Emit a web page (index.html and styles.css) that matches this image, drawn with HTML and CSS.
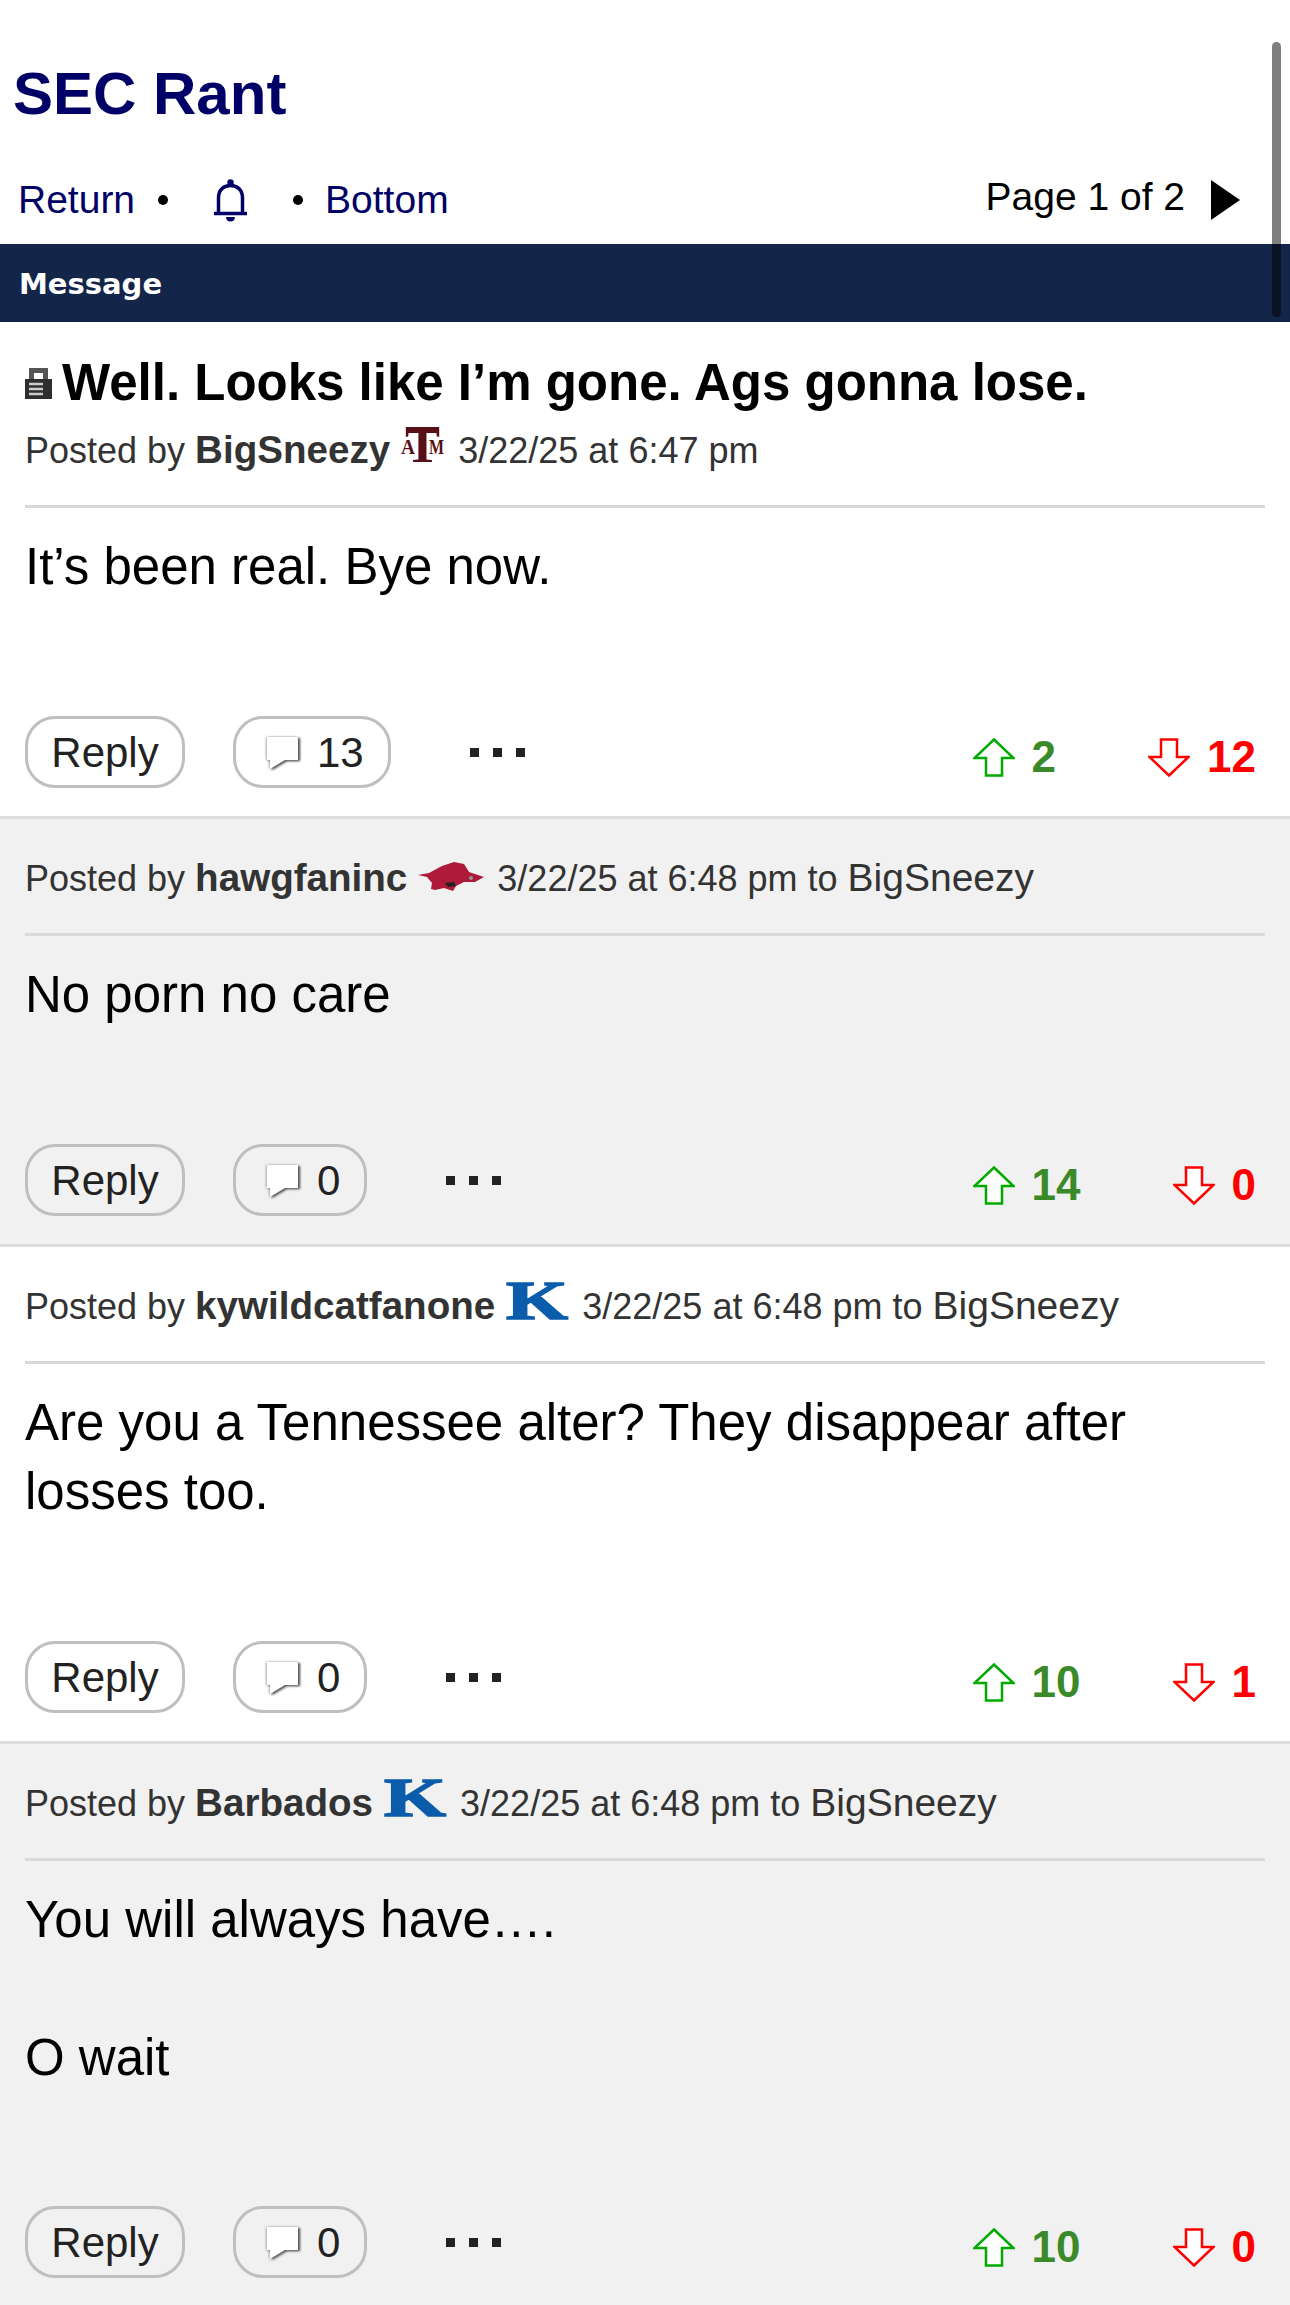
FILE: index.html
```html
<!DOCTYPE html>
<html lang="en">
<head>
	<meta charset="UTF-8">
	<title>SEC Rant</title>
	<link rel="stylesheet" href="styles.css">
</head>
<body>
	<div class="scrollbar"></div>
	<h1 class="boardTit"><a href="#">SEC Rant</a></h1>
	<div class="topNav">
		<div class="navLeft">
			<a href="#">Return</a>
			<span class="dot dotA"></span>
			<svg class="bell" viewBox="0 0 35 43"><path d="M5.500 33V19C5.500 11 10.500 6.500 17.500 6.500S29.500 11 29.500 19V33M1 34.500H34" fill="none" stroke="#006" stroke-width="3.500"/><circle cx="17.500" cy="3.500" r="3.200" fill="#006"/><path d="M13 38h9c0 3-2 4.500-4.500 4.500S13 41 13 38z" fill="#006"/></svg>
			<span class="dot dotB"></span>
			<a href="#">Bottom</a>
		</div>
		<div class="navRight">
			<span class="pageNum">Page 1 of 2</span>
			<span class="nextArrow"></span>
		</div>
	</div>
	<div class="msgBar">Message</div>

	<div class="post first">
		<div class="postTit">
			<svg class="lock" viewBox="0 0 27 33"><path d="M6.500 15V4.500H20.500V15" fill="none" stroke="#555" stroke-width="5"/><rect x="0" y="13" width="27" height="20" fill="#2e2e2e"/><path d="M4 18h14M4 23h14M4 28h14" stroke="#ccc" stroke-width="2.500"/></svg>
			<span>Well. Looks like I’m gone. Ags gonna lose.</span>
		</div>
		<div class="meta">Posted by <b>BigSneezy</b> <svg class="logo atm" viewBox="0 0 43 36"><text x="4" y="35" textLength="35" lengthAdjust="spacingAndGlyphs" class="logoT">T</text><rect x="5" y="0" width="33" height="6" fill="#581018"/><text x="0" y="27" textLength="14" lengthAdjust="spacingAndGlyphs" class="logoS">A</text><text x="28" y="27" textLength="15" lengthAdjust="spacingAndGlyphs" class="logoS">M</text></svg> 3/22/25 at 6:47 pm</div>
		<div class="postBody">It’s been real. Bye now.</div>
		<div class="actions">
			<a class="pill reply" href="#">Reply</a>
			<a class="pill cmt" href="#"><svg class="bubble" viewBox="0 0 38 37"><path d="M2 1H33V24H20L5 33V24H2z" fill="#fff"/></svg>13</a>
			<div class="more"><i></i><i></i><i></i></div>
			<div class="votes">
				<div class="vote up"><svg viewBox="0 0 42 39"><path d="M21 1.500L40.500 20H29V37.500H13V20H1.500z"/></svg>2</div>
				<div class="vote down"><svg viewBox="0 0 42 39"><path d="M21 37.500L40.500 19H29V1.500H13V19H1.500z"/></svg>12</div>
			</div>
		</div>
	</div>

	<div class="post alt">
		<div class="meta">Posted by <b>hawgfaninc</b> <svg class="logo hog" viewBox="0 0 68 30"><path d="M1 14L12 12 25 5 37 1 47 3 52 11 67 16 58 21 47 21 39 25 36 30 27 27 18 29 14 28 15 22 10 16z" fill="#ad1a3a"/><path d="M28 22L37 21 39 25 31 26z" fill="#222"/><circle cx="54" cy="17" r="2" fill="#8a9a9a"/></svg> 3/22/25 at 6:48 pm to <span class="toUser">BigSneezy</span></div>
		<div class="postBody">No porn no care</div>
		<div class="actions">
			<a class="pill reply" href="#">Reply</a>
			<a class="pill cmt" href="#"><svg class="bubble" viewBox="0 0 38 37"><path d="M2 1H33V24H20L5 33V24H2z" fill="#fff"/></svg>0</a>
			<div class="more"><i></i><i></i><i></i></div>
			<div class="votes">
				<div class="vote up"><svg viewBox="0 0 42 39"><path d="M21 1.500L40.500 20H29V37.500H13V20H1.500z"/></svg>14</div>
				<div class="vote down"><svg viewBox="0 0 42 39"><path d="M21 37.500L40.500 19H29V1.500H13V19H1.500z"/></svg>0</div>
			</div>
		</div>
	</div>

	<div class="post">
		<div class="meta">Posted by <b>kywildcatfanone</b> <svg class="logo kLogo" viewBox="0 0 62 36"><text x="0" y="35.500" textLength="62" lengthAdjust="spacingAndGlyphs" class="logoK">K</text></svg> 3/22/25 at 6:48 pm to <span class="toUser">BigSneezy</span></div>
		<div class="postBody">Are you a Tennessee alter? They disappear after losses too.</div>
		<div class="actions">
			<a class="pill reply" href="#">Reply</a>
			<a class="pill cmt" href="#"><svg class="bubble" viewBox="0 0 38 37"><path d="M2 1H33V24H20L5 33V24H2z" fill="#fff"/></svg>0</a>
			<div class="more"><i></i><i></i><i></i></div>
			<div class="votes">
				<div class="vote up"><svg viewBox="0 0 42 39"><path d="M21 1.500L40.500 20H29V37.500H13V20H1.500z"/></svg>10</div>
				<div class="vote down"><svg viewBox="0 0 42 39"><path d="M21 37.500L40.500 19H29V1.500H13V19H1.500z"/></svg>1</div>
			</div>
		</div>
	</div>

	<div class="post alt">
		<div class="meta">Posted by <b>Barbados</b> <svg class="logo kLogo" viewBox="0 0 62 36"><text x="0" y="35.500" textLength="62" lengthAdjust="spacingAndGlyphs" class="logoK">K</text></svg> 3/22/25 at 6:48 pm to <span class="toUser">BigSneezy</span></div>
		<div class="postBody">You will always have….<br><br>O wait</div>
		<div class="actions">
			<a class="pill reply" href="#">Reply</a>
			<a class="pill cmt" href="#"><svg class="bubble" viewBox="0 0 38 37"><path d="M2 1H33V24H20L5 33V24H2z" fill="#fff"/></svg>0</a>
			<div class="more"><i></i><i></i><i></i></div>
			<div class="votes">
				<div class="vote up"><svg viewBox="0 0 42 39"><path d="M21 1.500L40.500 20H29V37.500H13V20H1.500z"/></svg>10</div>
				<div class="vote down"><svg viewBox="0 0 42 39"><path d="M21 37.500L40.500 19H29V1.500H13V19H1.500z"/></svg>0</div>
			</div>
		</div>
	</div>
</body>
</html>
```

FILE: styles.css
```css
*{
	margin: 0;
	padding: 0;
	box-sizing: border-box;
}
html,body{
	height: 2305px;
	overflow: hidden;
}
body{
	position: relative;
	background: #fff;
	color: #000;
	font-family: "Liberation Sans", Arial, sans-serif;
}
a{
	text-decoration: none;
	color: inherit;
}
.scrollbar{
	position: absolute;
	top: 42px;
	right: 9px;
	width: 9px;
	height: 275px;
	border-radius: 5px;
	background: rgba(0,0,0,.5);
}
.boardTit{
	padding: 59px 0 0 13px;
	font-size: 60px;
	line-height: 70px;
	font-weight: bold;
	color: #006;
}
.topNav{
	display: flex;
	justify-content: space-between;
	align-items: center;
	height: 115px;
	padding: 27px 50px 0 18px;
}
.navLeft{
	display: flex;
	align-items: center;
	font-size: 39px;
	line-height: 46px;
	color: #006;
}
.dot{
	width: 10px;
	height: 10px;
	border-radius: 50%;
	background: #000;
}
.dotA{
	margin: 0 45px 0 23px;
}
.dotB{
	margin: 0 22px 0 45px;
}
.bell{
	width: 35px;
	height: 43px;
}
.navRight{
	display: flex;
	align-items: center;
}
.pageNum{
	font-size: 39px;
	line-height: 46px;
	margin-top: -6px;
}
.nextArrow{
	margin-left: 26px;
	border-left: 29px solid #000;
	border-top: 20px solid transparent;
	border-bottom: 20px solid transparent;
}
.msgBar{
	height: 78px;
	padding-left: 19px;
	background: #132649;
	color: #fff;
	font-family: "DejaVu Sans", Verdana, sans-serif;
	font-size: 29px;
	font-weight: bold;
	line-height: 80px;
}
.post{
	padding: 0 25px 28px;
	border-bottom: 3px solid #ddd;
}
.post.alt{
	background: #f1f1f1;
}
.postTit{
	display: flex;
	align-items: center;
	padding-top: 27px;
	font-size: 51px;
	line-height: 67px;
	font-weight: bold;
	white-space: nowrap;
}
.lock{
	width: 27px;
	height: 33px;
	margin-right: 10px;
}
.meta{
	height: 117px;
	padding-top: 36px;
	border-bottom: 3px solid #d9d9d9;
	font-size: 36px;
	line-height: 45px;
	color: #333;
	white-space: nowrap;
}
.first .meta{
	height: 92px;
	padding-top: 11px;
}
.meta b{
	font-size: 38.600px;
}
.toUser{
	font-size: 39px;
}
.logo{
	overflow: visible;
	margin: -20px 4px 0 1px;
}
.atm{
	width: 43px;
	height: 36px;
}
.hog{
	width: 68px;
	height: 30px;
	margin-left: 0;
	margin-right: 2px;
}
.kLogo{
	width: 62px;
	height: 36px;
}
.logoT{
	font: bold 52px "Liberation Serif", serif;
	fill: #581018;
}
.logoS{
	font: bold 20px "Liberation Serif", serif;
	fill: #581018;
}
.logoK{
	font: bold 54px "Liberation Serif", serif;
	fill: #0b5cab;
	stroke: #0b5cab;
	stroke-width: 1.500;
}
.postBody{
	padding-top: 24px;
	font-size: 51px;
	line-height: 69px;
}
.actions{
	display: flex;
	align-items: flex-start;
	margin-top: 115px;
	height: 72px;
}
.post:last-child .actions{
	margin-top: 114px;
}
.pill{
	display: flex;
	align-items: center;
	height: 72px;
	padding-top: 2px;
	border: 3px solid #bfbfbf;
	border-radius: 30px;
	font-size: 42px;
	color: #222;
}
.reply{
	width: 160px;
	justify-content: center;
}
.cmt{
	margin-left: 48px;
	padding-right: 24px;
	padding-left: 29px;
}
.bubble{
	width: 38px;
	height: 37px;
	margin: 2px 14px 0 0;
	filter: drop-shadow(2px 1px 1px #555) drop-shadow(-1px 0 1px #aaa);
}
.more{
	display: flex;
	gap: 14px;
	margin: 32px 0 0 79px;
}
.more i{
	width: 9px;
	height: 9px;
	background: #222;
}
.votes{
	display: flex;
	gap: 92px;
	margin: 21px 9px 0 auto;
}
.vote{
	display: flex;
	align-items: center;
	gap: 17px;
	font-size: 44px;
	line-height: 40px;
	font-weight: bold;
}
.vote svg{
	width: 42px;
	height: 39px;
	fill: #fff;
	stroke-width: 2.500;
}
.vote.up{
	color: #3a8a2a;
}
.vote.up svg{
	stroke: #0a0;
}
.vote.down{
	color: #f00;
}
.vote.down svg{
	stroke: #f00;
}
```
